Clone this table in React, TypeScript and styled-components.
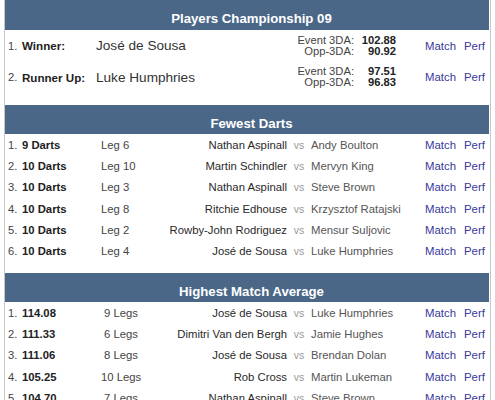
import React from "react";
import styled, { createGlobalStyle } from "styled-components";

const Global = createGlobalStyle`
  html, body { margin: 0; padding: 0; background: #fff; }
  body { font-family: "Liberation Sans", Arial, sans-serif; color: #333; }
`;

const Frame = styled.div`
  margin-left: 4px;
  width: 485px;
  border-left: 1px solid #c6c6c6;
  border-right: 1px solid #c6c6c6;
  display: flex;
  flex-direction: column;
`;

const Section = styled.section<{ $gap?: number }>`
  display: flex;
  flex-direction: column;
  padding-bottom: ${(p) => p.$gap ?? 11}px;
`;

const Header = styled.div<{ $h: number }>`
  height: ${(p) => p.$h}px;
  margin-right: 1px;
  background: #4a6788;
  color: #fff;
  font-weight: bold;
  font-size: 13.2px;
  display: flex;
  align-items: center;
  justify-content: center;
  padding: 7px 0 0 9px;
  box-sizing: border-box;
`;

const TopRow = styled.div`
  height: 31.5px;
  display: grid;
  grid-template-columns: 14px 74px 190px 68px 42px 29px 39px 1fr;
  align-items: center;
  padding-left: 3px;
  font-size: 11.2px;
`;

const Idx = styled.span`
  color: #444;
  font-size: 11.2px;
`;

const Label = styled.span`
  font-weight: bold;
  color: #222;
  font-size: 11.6px;
`;

const BigName = styled.span`
  font-size: 13.6px;
  color: #333;
`;

const StatCol = styled.div`
  display: flex;
  flex-direction: column;
  align-items: flex-end;
  line-height: 11px;
  font-size: 11.2px;
  color: #444;
`;

const StatVal = styled.span`
  font-weight: bold;
  color: #222;
`;

const Link = styled.a`
  color: #38389a;
  text-decoration: none;
  font-size: 11.4px;
`;

const ListRow = styled.div`
  height: 21.35px;
  display: grid;
  grid-template-columns: 14px 79px 40px 146px 24px 114px 39px 1fr;
  align-items: center;
  padding-left: 3px;
  font-size: 11.3px;
`;

const Val = styled.span`
  font-weight: bold;
  color: #222;
`;

const Leg = styled.span<{ $right?: boolean }>`
  color: #444;
  text-align: ${(p) => (p.$right ? "right" : "left")};
  padding-right: ${(p) => (p.$right ? 3 : 0)}px;
  white-space: nowrap;
`;

const P1 = styled.span`
  text-align: right;
  color: #2a2a2a;
  white-space: nowrap;
`;

const Vs = styled.span`
  text-align: center;
  color: #9a9a9a;
  font-size: 10.5px;
`;

const P2 = styled.span`
  color: #555;
  white-space: nowrap;
`;

const top = [
  { label: "Winner:", name: "José de Sousa", e: "102.88", o: "90.92" },
  { label: "Runner Up:", name: "Luke Humphries", e: "97.51", o: "96.83" },
];

const fewest = [
  ["9 Darts", "Leg 6", "Nathan Aspinall", "Andy Boulton"],
  ["10 Darts", "Leg 10", "Martin Schindler", "Mervyn King"],
  ["10 Darts", "Leg 3", "Nathan Aspinall", "Steve Brown"],
  ["10 Darts", "Leg 8", "Ritchie Edhouse", "Krzysztof Ratajski"],
  ["10 Darts", "Leg 2", "Rowby-John Rodriguez", "Mensur Suljovic"],
  ["10 Darts", "Leg 4", "José de Sousa", "Luke Humphries"],
];

const highest = [
  ["114.08", "9 Legs", "José de Sousa", "Luke Humphries"],
  ["111.33", "6 Legs", "Dimitri Van den Bergh", "Jamie Hughes"],
  ["111.06", "8 Legs", "José de Sousa", "Brendan Dolan"],
  ["105.25", "10 Legs", "Rob Cross", "Martin Lukeman"],
  ["104.70", "7 Legs", "Nathan Aspinall", "Steve Brown"],
];

function List({ rows, right }: { rows: string[][]; right?: boolean }) {
  return (
    <>
      {rows.map((r, i) => (
        <ListRow key={i}>
          <Idx>{i + 1}.</Idx>
          <Val>{r[0]}</Val>
          <Leg $right={right}>{r[1]}</Leg>
          <P1>{r[2]}</P1>
          <Vs>vs</Vs>
          <P2>{r[3]}</P2>
          <Link>Match</Link>
          <Link>Perf</Link>
        </ListRow>
      ))}
    </>
  );
}

export default function App() {
  return (
    <>
      <Global />
      <Frame>
        <Section $gap={12}>
          <Header $h={30}>Players Championship 09</Header>
          {top.map((t, i) => (
            <TopRow key={i}>
              <Idx>{i + 1}.</Idx>
              <Label>{t.label}</Label>
              <BigName>{t.name}</BigName>
              <StatCol>
                <span>Event 3DA:</span>
                <span>Opp-3DA:</span>
              </StatCol>
              <StatCol>
                <StatVal>{t.e}</StatVal>
                <StatVal>{t.o}</StatVal>
              </StatCol>
              <span />
              <Link>Match</Link>
              <Link>Perf</Link>
            </TopRow>
          ))}
        </Section>
        <Section>
          <Header $h={29}>Fewest Darts</Header>
          <List rows={fewest} />
        </Section>
        <Section>
          <Header $h={29}>Highest Match Average</Header>
          <List rows={highest} right />
        </Section>
      </Frame>
    </>
  );
}
